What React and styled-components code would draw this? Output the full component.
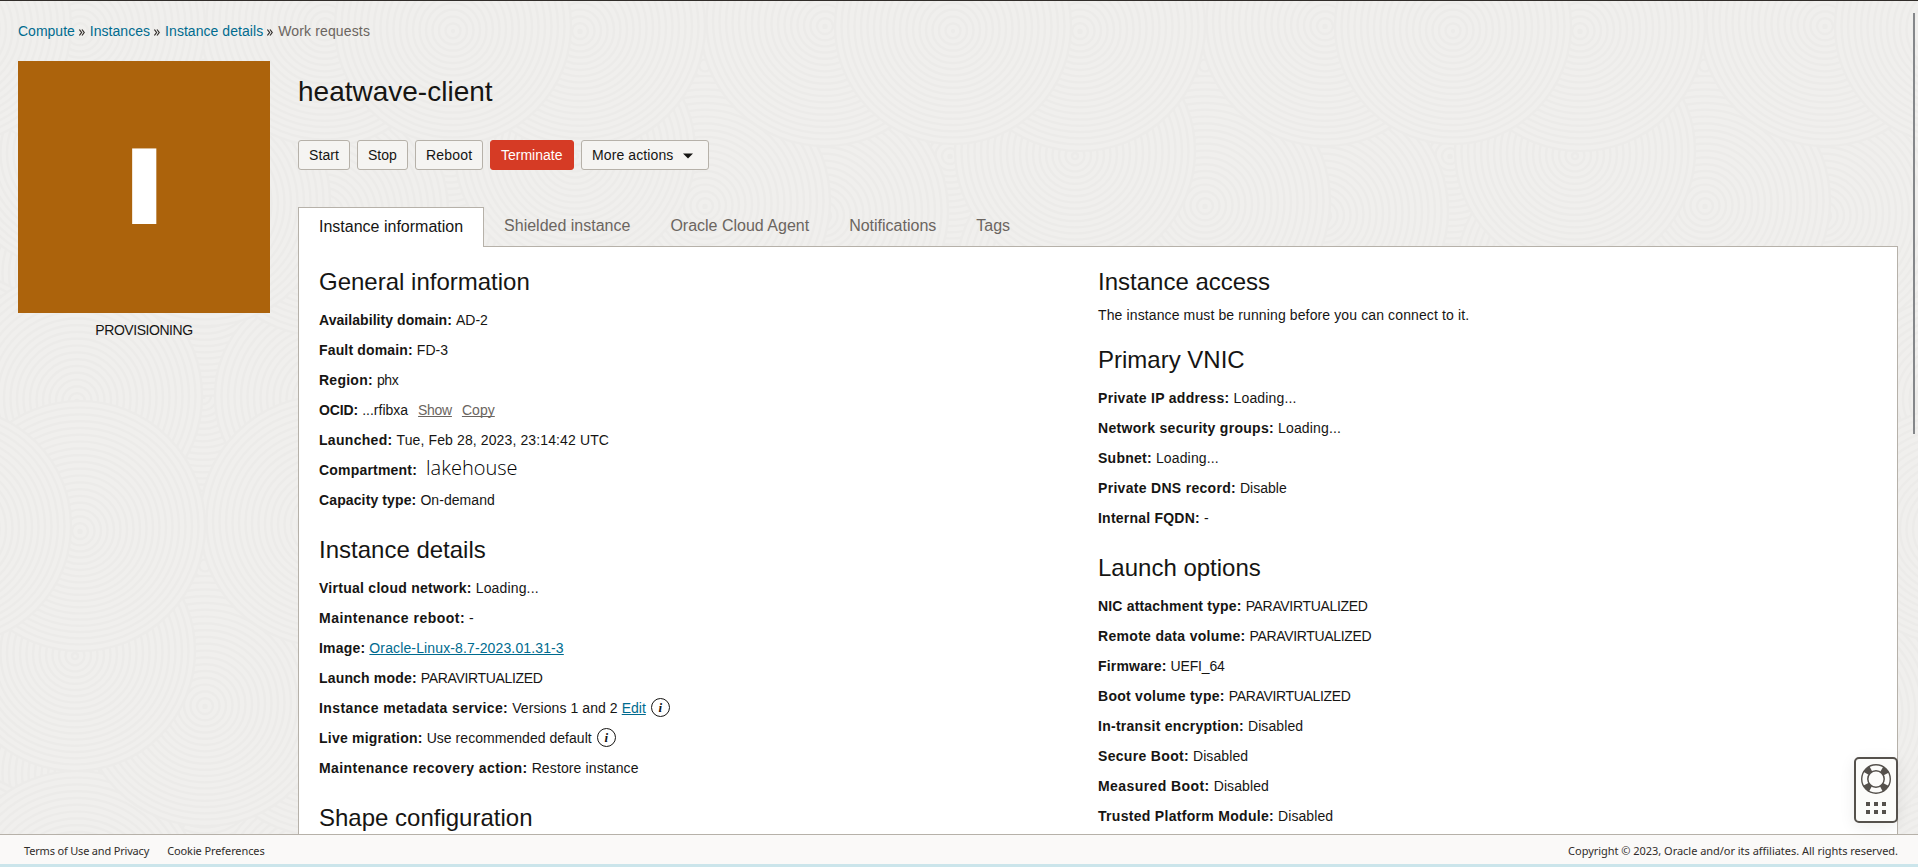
import React from "react";
import styled, { createGlobalStyle, css } from "styled-components";

const GlobalStyle = createGlobalStyle`
  *, *::before, *::after { box-sizing: border-box; }
  html, body { margin: 0; padding: 0; }
  body {
    background: #f0efed;
    color: #161513;
    font-family: "Liberation Sans", Arial, sans-serif;
    font-size: 14px;
    overflow: hidden;
  }
`;

const Page = styled.div`
  position: relative;
  display: flex;
  flex-direction: column;
  height: 100vh;
  overflow: hidden;
  border-top: 1px solid #312d2a;
`;

const Backdrop = styled.svg`
  position: absolute;
  inset: 0;
  width: 100%;
  height: 100%;
`;

const Main = styled.main`
  position: relative;
  flex: 1;
  min-height: 0;
  overflow: hidden;
  padding: 20px 20px 0 18px;
`;

const Breadcrumbs = styled.nav`
  display: flex;
  align-items: center;
  height: 20px;
`;

const Crumb = styled.a`
  line-height: 20px;
  letter-spacing: ${(p) => p.$tracking || 0}px;
  color: ${(p) => (p.$current ? "#6b6560" : "#006b8f")};
  text-decoration: none;
`;

const CrumbSeparator = styled.svg`
  width: 6px;
  height: 7px;
  margin: 2px 5px 0 4px;
`;

const Columns = styled.div`
  display: flex;
  align-items: flex-start;
  margin-top: 20px;
`;

const Aside = styled.aside`
  flex: none;
  width: 252px;
  margin-right: 28px;
`;

const StatusTile = styled.div`
  display: flex;
  align-items: center;
  justify-content: center;
  height: 252px;
  background: #ac630c;
  overflow: hidden;
`;

const TileLetter = styled.span`
  color: #fff;
  font-size: 110px;
  font-weight: 700;
  line-height: 126px;
  transform: translateY(-1.5px) scaleX(1.52);
`;

const StatusText = styled.div`
  margin-top: 7px;
  line-height: 20px;
  text-align: center;
  letter-spacing: -0.45px;
`;

const Content = styled.section`
  flex: 1;
  min-width: 0;
`;

const Title = styled.h1`
  margin: 14px 0 0;
  font-size: 28px;
  font-weight: 400;
  line-height: 34px;
`;

const Toolbar = styled.div`
  display: flex;
  gap: 7px;
  margin-top: 31px;
`;

const Button = styled.button`
  display: flex;
  align-items: center;
  width: ${(p) => p.$width}px;
  height: 30px;
  padding: 0 0 0 10px;
  border: 1px solid #b6b1a9;
  border-radius: 3px;
  background: #f5f4f2;
  color: #161513;
  font: 14px/28px "Liberation Sans", Arial, sans-serif;
  letter-spacing: ${(p) => p.$tracking || 0}px;
  white-space: nowrap;
  ${(p) =>
    p.$danger &&
    css`
      background: #d63b25;
      border-color: #d63b25;
      color: #fff;
    `}
`;

const Caret = styled.svg`
  width: 10px;
  height: 6px;
  margin: 1px 0 0 10px;
`;

const TabList = styled.div`
  position: relative;
  z-index: 1;
  display: flex;
  height: 40px;
  margin: 37px 0 -1px;
`;

const Tab = styled.div`
  padding: 0 20px;
  font-size: 16px;
  line-height: 37px;
  color: #6b6560;
  ${(p) =>
    p.$active &&
    css`
      padding: 1px 20px 0;
      border: 1px solid #b6b1a9;
      border-bottom: 0;
      background: #fff;
      color: #161513;
      line-height: 36px;
    `}
`;

const Panel = styled.div`
  display: grid;
  grid-template-columns: 1fr 1fr;
  min-height: 700px;
  padding: 20px;
  border: 1px solid #b6b1a9;
  background: #fff;
`;

const Group = styled.section`
  & + & { margin-top: 20px; }
`;

const Heading = styled.h2`
  margin: 0 0 8px;
  font-size: 24px;
  font-weight: 400;
  line-height: 30px;
`;

const Note = styled.p`
  margin: 0;
  line-height: 20px;
  letter-spacing: 0.12px;
`;

const Row = styled.div`
  display: flex;
  align-items: center;
  height: 30px;
  line-height: 30px;
  white-space: pre;
`;

const Label = styled.strong`
  font-weight: 700;
  margin-right: 4px;
  letter-spacing: ${(p) => p.$tracking || 0}px;
`;

const Value = styled.span`
  letter-spacing: ${(p) => p.$tracking || 0}px;
`;

const Link = styled.a`
  color: ${(p) => (p.$muted ? "#6b6560" : "#006b8f")};
  text-decoration: underline;
  text-decoration-thickness: 1px;
  text-underline-offset: 1px;
  text-decoration-skip-ink: none;
  letter-spacing: ${(p) => p.$tracking || 0}px;
  margin-left: ${(p) => p.$gap || 0}px;
`;

const Compartment = styled.span`
  margin: -5px 0 0 5px;
  font-family: "Open Sans", "Noto Sans", sans-serif;
  font-size: 20px;
  font-weight: 300;
  line-height: 26px;
  color: #000;
`;

const InfoRing = styled.span`
  display: inline-flex;
  align-items: center;
  justify-content: center;
  width: 19px;
  height: 19px;
  margin: -1px 0 0 5px;
  border: 1.4px solid #161513;
  border-radius: 50%;
  font: italic 700 13px/15px "Liberation Serif", serif;
`;

const Footer = styled.footer`
  position: relative;
  display: flex;
  align-items: center;
  flex: none;
  height: 30px;
  padding: 1px 20px 0 24px;
  border-top: 1px solid #b6b1a9;
  background: #faf9f8;
  color: #312d2a;
  font-family: "Noto Sans", sans-serif;
  font-size: 11px;
`;

const FooterLink = styled.a`
  margin-right: 18px;
  letter-spacing: ${(p) => p.$tracking}px;
`;

const Copyright = styled.span`
  margin-left: auto;
  letter-spacing: -0.03px;
`;

const BottomStrip = styled.div`
  position: relative;
  flex: none;
  height: 3px;
  background: #cbe5eb;
`;

const ScrollThumb = styled.div`
  position: absolute;
  top: 12px;
  right: 3px;
  width: 2px;
  height: 421px;
  background: #85878a;
`;

const HelpButton = styled.button`
  position: absolute;
  right: 20px;
  bottom: 44px;
  display: flex;
  flex-direction: column;
  align-items: center;
  gap: 8px;
  width: 44px;
  height: 66px;
  padding: 5px 0 0;
  border: 2px solid #55514c;
  border-radius: 5px;
  background: #fcfcfa;
  box-shadow: 0 4px 16px rgba(22, 21, 19, 0.08);
`;

const DotGrid = styled.span`
  display: grid;
  grid-template-columns: repeat(3, 4px);
  gap: 4px;
`;

const Dot = styled.i`
  width: 4px;
  height: 4px;
  background: #55514c;
`;

const DISCS = [
  [450, 270, 125], [205, 60, 110], [450, 150, 125], [325, 330, 125],
  [203, 390, 125], [205, 275, 120], [77, 270, 120], [325, 395, 110],
  [450, 395, 125], [77, 395, 125], [323, 210, 125], [205, 200, 125],
  [75, 150, 120], [325, 20, 125], [80, 25, 125], [453, 25, 118],
];
const OFFSETS = [-500, 0, 500];

function Waves() {
  return (
    <Backdrop aria-hidden="true">
      <defs>
        <pattern id="waves" width="500" height="500" patternUnits="userSpaceOnUse">
          <rect width="500" height="500" fill="#f0efed" />
          {DISCS.map(([cx, cy, r], i) =>
            OFFSETS.map((dx) =>
              OFFSETS.map((dy) => (
                <g key={`${i}${dx}${dy}`} fill="none" stroke="#ecebe9" strokeWidth="2.2">
                  <circle cx={cx + dx} cy={cy + dy} r={r} fill="#f0efed" />
                  {Array.from({ length: Math.floor(r / 6.5) }, (_, k) => (
                    <circle key={k} cx={cx + dx} cy={cy + dy + k * 0.3} r={Math.max(1, r - (k + 1) * 6.5)} />
                  ))}
                </g>
              ))
            )
          )}
        </pattern>
      </defs>
      <rect width="100%" height="100%" fill="url(#waves)" />
    </Backdrop>
  );
}

const Separator = () => (
  <CrumbSeparator viewBox="0 0 6 7">
    <path d="M.4.5 2.6 3.5.4 6.5M3 .5l2.2 3L3 6.5" fill="none" stroke="#312d2a" strokeWidth="1.2" />
  </CrumbSeparator>
);

const Info = () => <InfoRing>i</InfoRing>;

const LifeRing = () => (
  <svg width="30" height="30" viewBox="0 0 30 30" fill="none" stroke="#55514c">
    <circle cx="15" cy="15" r="11.3" strokeWidth="6.5" strokeDasharray="6.4 11.35" strokeDashoffset="-5.67" />
    <circle cx="15" cy="15" r="14.3" strokeWidth="1.4" />
    <circle cx="15" cy="15" r="8.2" strokeWidth="1.5" />
  </svg>
);

const Field = ({ label, tracking, value, valueTracking, children }) => (
  <Row>
    <Label $tracking={tracking}>{label}:</Label>
    {value && <Value $tracking={valueTracking}>{value}</Value>}
    {children}
  </Row>
);

export default function App() {
  return (
    <>
      <GlobalStyle />
      <Page>
        <Waves />
        <Main>
          <Breadcrumbs>
            <Crumb>Compute</Crumb>
            <Separator />
            <Crumb $tracking={0.04}>Instances</Crumb>
            <Separator />
            <Crumb $tracking={0.05}>Instance details</Crumb>
            <Separator />
            <Crumb $current $tracking={0.14}>Work requests</Crumb>
          </Breadcrumbs>
          <Columns>
            <Aside>
              <StatusTile>
                <TileLetter>I</TileLetter>
              </StatusTile>
              <StatusText>PROVISIONING</StatusText>
            </Aside>
            <Content>
              <Title>heatwave-client</Title>
              <Toolbar>
                <Button $width={52} $tracking={0.08}>Start</Button>
                <Button $width={51}>Stop</Button>
                <Button $width={68} $tracking={0.18}>Reboot</Button>
                <Button $width={84} $danger>Terminate</Button>
                <Button $width={128} $tracking={0.11}>
                  More actions
                  <Caret viewBox="0 0 10 6">
                    <path d="M0 .5h10L5 5.5z" fill="#161513" />
                  </Caret>
                </Button>
              </Toolbar>
              <TabList>
                <Tab $active>Instance information</Tab>
                <Tab>Shielded instance</Tab>
                <Tab>Oracle Cloud Agent</Tab>
                <Tab>Notifications</Tab>
                <Tab>Tags</Tab>
              </TabList>
              <Panel>
                <div>
                  <Group>
                    <Heading>General information</Heading>
                    <Field label="Availability domain" tracking={0.06} value="AD-2" />
                    <Field label="Fault domain" tracking={0.15} value="FD-3" valueTracking={0.1} />
                    <Field label="Region" tracking={0.25} value="phx" valueTracking={-0.3} />
                    <Field label="OCID" tracking={-0.1} value="...rfibxa">
                      <Link $muted $gap={10} $tracking={-0.3}>Show</Link>
                      <Link $muted $gap={10} $tracking={0.05}>Copy</Link>
                    </Field>
                    <Field label="Launched" tracking={0.3} value="Tue, Feb 28, 2023, 23:14:42 UTC" valueTracking={0.12} />
                    <Field label="Compartment" tracking={0.2}>
                      <Compartment>lakehouse</Compartment>
                    </Field>
                    <Field label="Capacity type" tracking={0.12} value="On-demand" valueTracking={0.06} />
                  </Group>
                  <Group>
                    <Heading>Instance details</Heading>
                    <Field label="Virtual cloud network" tracking={0.27} value="Loading..." valueTracking={0.15} />
                    <Field label="Maintenance reboot" tracking={0.48} value="-" />
                    <Field label="Image" tracking={0.2}>
                      <Link $tracking={0.13}>Oracle-Linux-8.7-2023.01.31-3</Link>
                    </Field>
                    <Field label="Launch mode" tracking={0.17} value="PARAVIRTUALIZED" valueTracking={-0.34} />
                    <Field label="Instance metadata service" tracking={0.39} value="Versions 1 and 2" valueTracking={0.08}>
                      <Link $gap={4}>Edit</Link>
                      <Info />
                    </Field>
                    <Field label="Live migration" tracking={0.22} value="Use recommended default" valueTracking={0.04}>
                      <Info />
                    </Field>
                    <Field label="Maintenance recovery action" tracking={0.42} value="Restore instance" valueTracking={0.12} />
                  </Group>
                  <Group>
                    <Heading>Shape configuration</Heading>
                  </Group>
                </div>
                <div>
                  <Group>
                    <Heading>Instance access</Heading>
                    <Note>The instance must be running before you can connect to it.</Note>
                  </Group>
                  <Group>
                    <Heading>Primary VNIC</Heading>
                    <Field label="Private IP address" tracking={0.3} value="Loading..." valueTracking={0.15} />
                    <Field label="Network security groups" tracking={0.3} value="Loading..." valueTracking={0.15} />
                    <Field label="Subnet" tracking={0.25} value="Loading..." valueTracking={0.15} />
                    <Field label="Private DNS record" tracking={0.3} value="Disable" />
                    <Field label="Internal FQDN" tracking={0.22} value="-" />
                  </Group>
                  <Group>
                    <Heading>Launch options</Heading>
                    <Field label="NIC attachment type" tracking={0.18} value="PARAVIRTUALIZED" valueTracking={-0.33} />
                    <Field label="Remote data volume" tracking={0.31} value="PARAVIRTUALIZED" valueTracking={-0.33} />
                    <Field label="Firmware" tracking={0.18} value="UEFI_64" valueTracking={-0.15} />
                    <Field label="Boot volume type" tracking={0.27} value="PARAVIRTUALIZED" valueTracking={-0.33} />
                    <Field label="In-transit encryption" tracking={0.27} value="Disabled" valueTracking={0.09} />
                    <Field label="Secure Boot" tracking={0.32} value="Disabled" valueTracking={0.09} />
                    <Field label="Measured Boot" tracking={0.42} value="Disabled" valueTracking={0.09} />
                    <Field label="Trusted Platform Module" tracking={0.3} value="Disabled" valueTracking={0.09} />
                  </Group>
                </div>
              </Panel>
            </Content>
          </Columns>
        </Main>
        <Footer>
          <FooterLink $tracking={-0.18}>Terms of Use and Privacy</FooterLink>
          <FooterLink $tracking={-0.1}>Cookie Preferences</FooterLink>
          <Copyright>Copyright © 2023, Oracle and/or its affiliates. All rights reserved.</Copyright>
        </Footer>
        <BottomStrip />
        <ScrollThumb />
        <HelpButton aria-label="Help">
          <LifeRing />
          <DotGrid>
            {[0, 1, 2, 3, 4, 5].map((n) => (
              <Dot key={n} />
            ))}
          </DotGrid>
        </HelpButton>
      </Page>
    </>
  );
}
